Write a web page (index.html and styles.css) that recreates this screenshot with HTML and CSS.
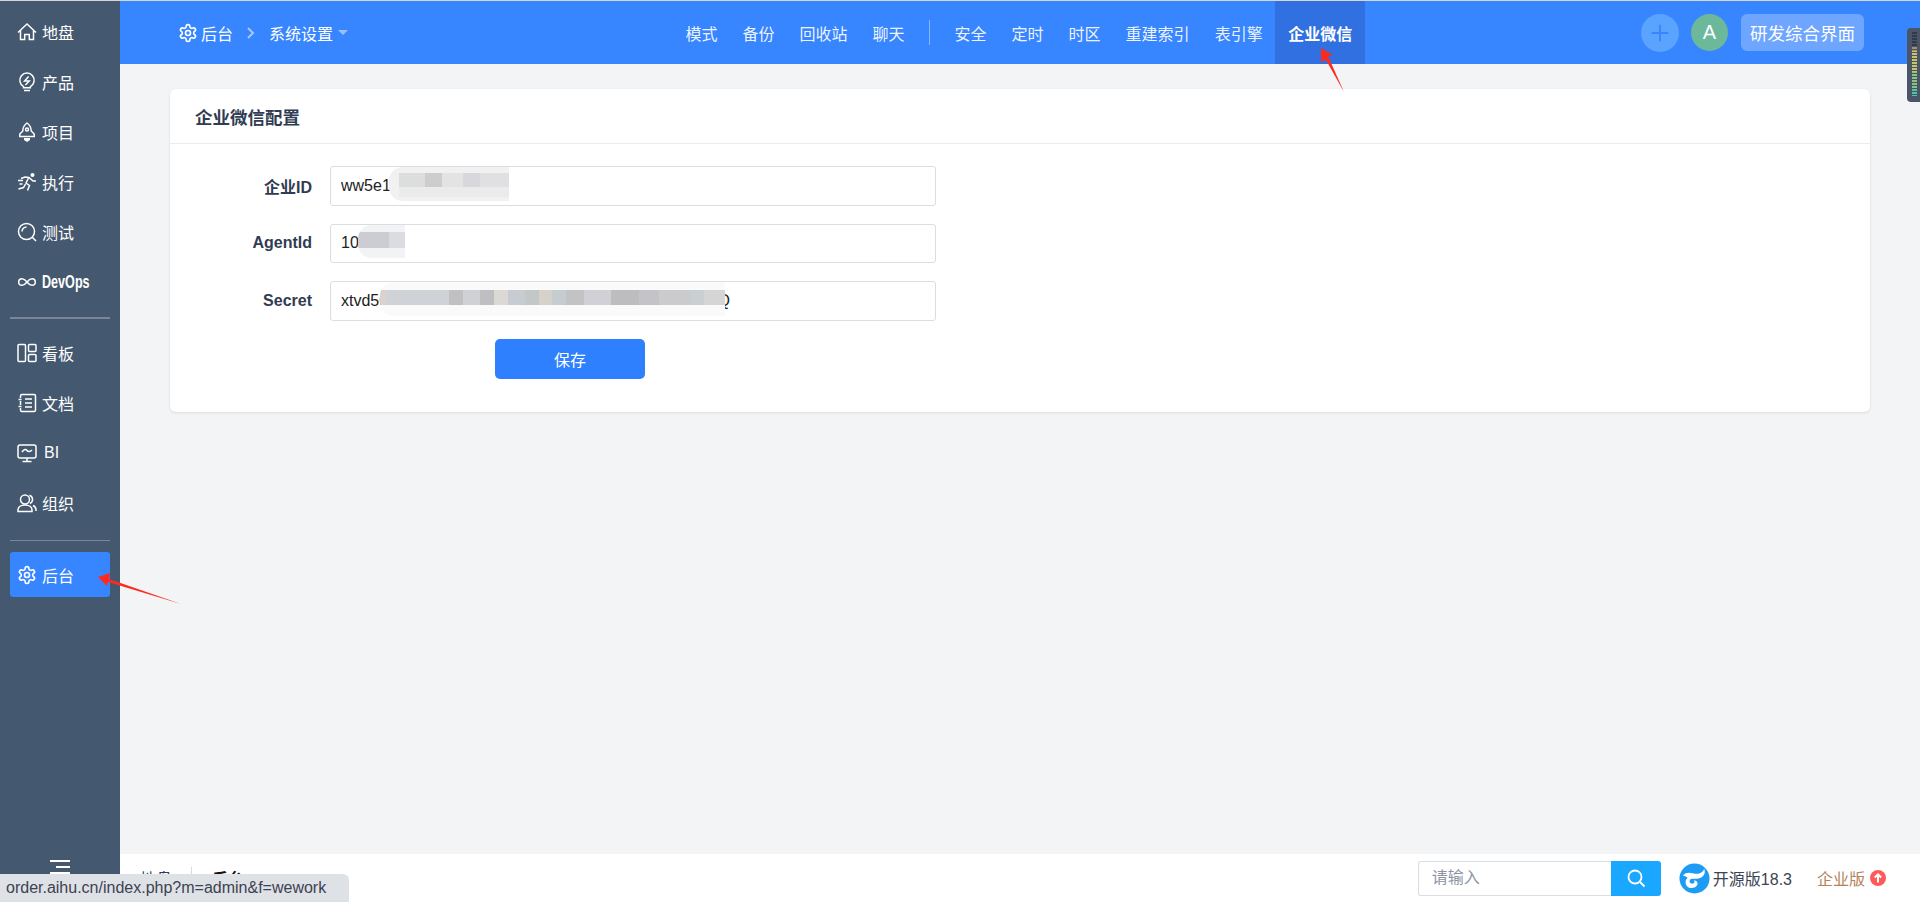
FILE: index.html
```html
<!DOCTYPE html>
<html lang="zh-CN">
<head>
    <meta charset="UTF-8">
    <title>企业微信配置</title>
    <link rel="stylesheet" href="styles.css">
</head>
<body>
    <svg class="icon-defs" width="0" height="0">
        <symbol id="gear" viewBox="0 0 24 24">
            <path d="M12.22 2h-.44a2 2 0 0 0-2 2v.18a2 2 0 0 1-1 1.73l-.43.25a2 2 0 0 1-2 0l-.15-.08a2 2 0 0 0-2.73.73l-.22.38a2 2 0 0 0 .73 2.73l.15.1a2 2 0 0 1 1 1.72v.51a2 2 0 0 1-1 1.74l-.15.09a2 2 0 0 0-.73 2.73l.22.38a2 2 0 0 0 2.73.73l.15-.08a2 2 0 0 1 2 0l.43.25a2 2 0 0 1 1 1.73V20a2 2 0 0 0 2 2h.44a2 2 0 0 0 2-2v-.18a2 2 0 0 1 1-1.73l.43-.25a2 2 0 0 1 2 0l.15.08a2 2 0 0 0 2.73-.73l.22-.39a2 2 0 0 0-.73-2.73l-.15-.08a2 2 0 0 1-1-1.74v-.5a2 2 0 0 1 1-1.74l.15-.09a2 2 0 0 0 .73-2.73l-.22-.38a2 2 0 0 0-2.73-.73l-.15.08a2 2 0 0 1-2 0l-.43-.25a2 2 0 0 1-1-1.73V4a2 2 0 0 0-2-2z"/>
            <circle cx="12" cy="12" r="3"/>
        </symbol>
    </svg>

    <div class="app">
        <aside class="sidebar">
            <a class="side-item">
                <svg class="side-icon" viewBox="0 0 20 20"><path d="M1 10.5 10 2l9 8.5M3.5 8.5v9h4.2v-5h4.6v5h4.2v-9"/></svg>
                <span>地盘</span>
            </a>
            <a class="side-item">
                <svg class="side-icon" viewBox="0 0 20 20"><path d="M6.6 14.6a7.2 7.2 0 1 1 6.8 0v1.2H6.6zM7 18.6h6M11.6 4.6 7.6 9h4.6l-3.8 4"/></svg>
                <span>产品</span>
            </a>
            <a class="side-item">
                <svg class="side-icon" viewBox="0 0 20 20"><path d="M10 1c-3 2-4.2 5-4.2 8l-3 3v2.6h14.400V12l-3-3c0-3-1.200-6-4.200-8zM5.800 14.600h8.400"/><circle cx="10" cy="7.500" r="1.500"/><path class="solid" d="M7 16h6v2l-3 2-3-2z"/></svg>
                <span>项目</span>
            </a>
            <a class="side-item">
                <svg class="side-icon" viewBox="0 0 20 20"><circle class="solid" cx="15.500" cy="3" r="2"/><path d="M1 8.500h5M2.500 12h3M4 6.500l4-1.500 4 .5 4 3.500h3M11.500 6 9 11l3.500 2.500-2 5M8.500 12 6.500 15.500 1.500 17"/></svg>
                <span>执行</span>
            </a>
            <a class="side-item">
                <svg class="side-icon" viewBox="0 0 20 20"><circle cx="9.500" cy="9.500" r="8"/><path d="m15 15 4 4M5 9.500a4.500 4.500 0 0 1 4.500-4.500"/></svg>
                <span>测试</span>
            </a>
            <a class="side-item">
                <svg class="side-icon" viewBox="0 0 20 20"><path d="M10 10C8.200 7.600 6.800 6.700 5 6.700a3.300 3.300 0 0 0 0 6.600c1.800 0 3.200-.9 5-3.300s3.200-3.300 5-3.300a3.300 3.300 0 0 1 0 6.600c-1.800 0-3.200-.9-5-3.300z"/></svg>
                <span class="devops">DevOps</span>
            </a>
            <div class="side-divider thick"></div>
            <a class="side-item">
                <svg class="side-icon" viewBox="0 0 20 20"><rect x="1" y="1.500" width="7.500" height="17" rx="1"/><rect x="11.500" y="1.500" width="7.500" height="7" rx="1"/><rect x="11.500" y="11.500" width="7.500" height="7" rx="1"/></svg>
                <span>看板</span>
            </a>
            <a class="side-item">
                <svg class="side-icon" viewBox="0 0 20 20"><path d="M3.500 5V3a1.500 1.500 0 0 1 1.500-1.500h12A1.500 1.500 0 0 1 18.500 3v14a1.500 1.500 0 0 1-1.500 1.500H5A1.500 1.500 0 0 1 3.500 17v-2M3.500 8v4M1.500 6.500h3M1.500 13.500h3M8 6h7M8 10h7M8 14h7"/></svg>
                <span>文档</span>
            </a>
            <a class="side-item">
                <svg class="side-icon" viewBox="0 0 20 20"><rect x="1" y="2" width="18" height="13" rx="2"/><path d="M5 9c2-3 4-3 5-1.500s3 1.500 5-.5M10 15v3.500M5.500 18.500h9"/></svg>
                <span class="bi">BI</span>
            </a>
            <a class="side-item">
                <svg class="side-icon" viewBox="0 0 20 20"><circle cx="8" cy="6.500" r="4.500"/><path d="M1 18.500v-1.500c0-3 3-5 7-5s7 2 7 5v1.500zM12.500 2.200a4.500 4.500 0 0 1 .5 8.300M16 12.500c2 .8 3 2.500 3 4.500v1"/></svg>
                <span>组织</span>
            </a>
            <div class="side-divider"></div>
            <a class="side-item active">
                <svg class="side-icon gear"><use href="#gear"/></svg>
                <span>后台</span>
            </a>
            <a class="side-toggle">
                <svg viewBox="0 0 20 20"><path d="M0 1h20M6 7h14M0 13h20"/></svg>
            </a>
        </aside>

        <div class="main">
            <header class="topbar">
                <div class="crumbs">
                    <svg class="crumb-gear"><use href="#gear"/></svg>
                    <span>后台</span>
                    <svg class="crumb-arrow" viewBox="0 0 10 14"><path d="m2 2 5 5-5 5"/></svg>
                    <span>系统设置</span>
                    <i class="caret"></i>
                </div>
                <nav class="topnav">
                    <a>模式</a>
                    <a>备份</a>
                    <a>回收站</a>
                    <a>聊天</a>
                    <div class="nav-divider"></div>
                    <a>安全</a>
                    <a>定时</a>
                    <a>时区</a>
                    <a>重建索引</a>
                    <a>表引擎</a>
                    <a class="active">企业微信</a>
                </nav>
                <div class="top-right">
                    <button type="button" class="btn-add">
                        <svg viewBox="0 0 24 24"><path d="M1 12h22M12 1v22"/></svg>
                    </button>
                    <div class="avatar">A</div>
                    <button type="button" class="btn-space">研发综合界面</button>
                </div>
            </header>

            <div class="content">
                <section class="card">
                    <h2 class="card-title">企业微信配置</h2>
                    <form class="card-body">
                        <div class="form-row">
                            <label for="corp-id">企业ID</label>
                            <div class="field">
                                <input type="text" id="corp-id" value="ww5e1000000000000">
                                <span class="blur blur-id"></span>
                            </div>
                        </div>
                        <div class="form-row">
                            <label for="agent-id">AgentId</label>
                            <div class="field">
                                <input type="text" id="agent-id" value="1000000">
                                <span class="blur blur-agent"></span>
                            </div>
                        </div>
                        <div class="form-row">
                            <label for="secret">Secret</label>
                            <div class="field">
                                <input type="text" id="secret" value="xtvd500000000000000000000000000000000000000Q">
                                <span class="blur blur-secret"></span>
                            </div>
                        </div>
                        <div class="form-row">
                            <span class="label-gap"></span>
                            <div class="form-actions">
                                <button type="button" class="btn-save">保存</button>
                            </div>
                        </div>
                    </form>
                </section>
            </div>

            <footer class="bottombar">
                <div class="foot-crumbs">
                    <span>地盘</span>
                    <i class="foot-sep"></i>
                    <strong>后台</strong>
                </div>
                <div class="foot-right">
                    <div class="search">
                        <input type="text" placeholder="请输入">
                        <button type="button">
                            <svg viewBox="0 0 20 20"><circle cx="9" cy="9" r="6.500"/><path d="m14 14 4.500 4.500"/></svg>
                        </button>
                    </div>
                    <div class="version">
                        <svg class="logo" viewBox="0 0 32 32">
                            <circle class="logo-disc" cx="16" cy="16" r="15.500"/>
                            <path class="logo-swirl" d="M4 13c5-6 11-1 16-2 3-.5 5-2 6-5 2 5-1 9-6 10-4 .8-8-1-9 2-.7 2.500 2 4 4 3 1.500-.7 1.500-2.500 0-3 3-.5 5 2 4 4.500-1.200 3-6 4.500-9.500 2.500C6 23 6 17 9 15.500 7.500 14 5.500 13.500 4 13z"/>
                        </svg>
                        <span>开源版18.3</span>
                    </div>
                    <div class="edition">
                        <span>企业版</span>
                        <svg class="up-badge" viewBox="0 0 16 16">
                            <circle cx="8" cy="8" r="8"/>
                            <path d="M8 12.500V4.500M4.800 7.500 8 4.300l3.200 3.200"/>
                        </svg>
                    </div>
                </div>
            </footer>
        </div>
    </div>

    <div class="status-bubble">order.aihu.cn/index.php?m=admin&amp;f=wework</div>
    <div class="meter"></div>

    <svg class="arrows" viewBox="0 0 1920 902">
        <polygon points="1321,48 1333,55 1328,56 1344,92 1326,60 1321,62"/>
        <polygon points="98,577 110,573 109,579 181,604 108,582 107,586"/>
    </svg>
</body>
</html>
```
FILE: styles.css
```css
:root {
    --primary-color: #3785ff;
    --text-color: #313c52;
    --border-color: #dcdde0;
    --background-color: #f3f4f6;
    --sidebar-color: #44586f;
}
html, body {
    margin: 0;
    height: 100%;
    overflow: hidden;
}
body {
    position: relative;
    border-top: 1px solid #d6d6d6;
    box-sizing: border-box;
    font-family: "Liberation Sans", "Noto Sans CJK SC", sans-serif;
    font-size: 16px;
    color: var(--text-color);
    background-color: var(--background-color);
}
.icon-defs {
    position: absolute;
}
.app {
    display: flex;
    height: 100%;
}

/* sidebar */
.sidebar {
    width: 120px;
    flex-shrink: 0;
    box-sizing: border-box;
    padding: 6px 10px 0;
    display: flex;
    flex-direction: column;
    background-color: var(--sidebar-color);
    color: #fff;
}
.side-item {
    height: 50px;
    flex-shrink: 0;
    display: flex;
    align-items: center;
    gap: 5px;
    padding-left: 7px;
    box-sizing: border-box;
}
.side-item.active {
    height: 45px;
    border-radius: 3px;
    background-color: var(--primary-color);
}
.side-icon {
    width: 20px;
    height: 20px;
    flex-shrink: 0;
    fill: none;
    stroke: #fff;
    stroke-width: 1.5;
}
.side-icon .solid {
    fill: #fff;
    stroke: none;
}
.side-icon.gear {
    stroke-width: 2;
}
.devops {
    display: inline-block;
    font-size: 18px;
    font-weight: 700;
    transform: scaleX(0.7);
    transform-origin: left center;
}
.bi {
    margin-left: 2px;
}
.side-divider {
    height: 1px;
    margin: 12px 0 11px;
    background-color: rgba(255, 255, 255, 0.28);
}
.side-divider.thick {
    height: 2px;
    margin: 10px 0 9px;
}
.side-toggle {
    margin: auto 0 0 40px;
    height: 42px;
    width: 20px;
}
.side-toggle svg {
    width: 20px;
    height: 20px;
    fill: none;
    stroke: #fff;
    stroke-width: 2;
}

/* top bar */
.main {
    flex: 1;
    min-width: 0;
    display: flex;
    flex-direction: column;
}
.topbar {
    height: 63px;
    flex-shrink: 0;
    display: flex;
    align-items: stretch;
    background-color: var(--primary-color);
    color: #fff;
}
.crumbs {
    width: 553px;
    box-sizing: border-box;
    padding-left: 58px;
    display: flex;
    align-items: center;
}
.crumb-gear {
    width: 20px;
    height: 20px;
    margin-right: 3px;
    fill: none;
    stroke: #fff;
    stroke-width: 2;
}
.crumb-arrow {
    width: 10px;
    height: 14px;
    margin: 0 13px;
    fill: none;
    stroke: rgba(255, 255, 255, 0.55);
    stroke-width: 2;
}
.caret {
    margin-left: 5px;
    border-top: 5px solid rgba(255, 255, 255, 0.5);
    border-left: 5px solid transparent;
    border-right: 5px solid transparent;
}
.topnav {
    display: flex;
    align-items: stretch;
}
.topnav a {
    display: flex;
    align-items: center;
    padding: 0 12.5px;
    color: rgba(255, 255, 255, 0.92);
}
.topnav a.active {
    padding: 0 13px;
    font-weight: 700;
    color: #fff;
    background-color: #3170e0;
}
.nav-divider {
    width: 1px;
    height: 25px;
    margin: 19px 12px 0;
    background-color: rgba(255, 255, 255, 0.4);
}
.top-right {
    margin-left: auto;
    padding-right: 56px;
    display: flex;
    align-items: center;
}
.btn-add {
    width: 38px;
    height: 38px;
    padding: 10px;
    border: none;
    border-radius: 50%;
    background-color: #5aa4ff;
}
.btn-add svg {
    display: block;
    width: 100%;
    fill: none;
    stroke: #3785ff;
    stroke-width: 2.5;
}
.avatar {
    width: 37px;
    height: 37px;
    margin-left: 12px;
    border-radius: 50%;
    display: flex;
    align-items: center;
    justify-content: center;
    font-size: 20px;
    color: #fff;
    background-color: #6bb99a;
}
.btn-space {
    height: 37px;
    margin-left: 13px;
    padding: 0 9px;
    border: none;
    border-radius: 6px;
    font-family: inherit;
    font-size: 17.500px;
    color: #fff;
    background-color: #6ea5ff;
}

/* config card */
.content {
    flex: 1;
    padding: 25px 50px 0;
    min-height: 0;
}
.card {
    height: 323px;
    border-radius: 6px;
    background-color: #fff;
    box-shadow: 0 1px 3px rgba(0, 0, 0, 0.1);
}
.card-title {
    margin: 0;
    height: 55px;
    padding-left: 25px;
    display: flex;
    align-items: center;
    box-sizing: border-box;
    border-bottom: 1px solid #ececee;
    font-size: 17.500px;
    font-weight: 700;
}
.card-body {
    padding-top: 22px;
    display: flex;
    flex-direction: column;
    gap: 18px;
}
.form-row {
    display: flex;
    align-items: center;
    gap: 18px;
}
.form-row label, .label-gap {
    width: 142px;
    text-align: right;
    font-weight: 700;
}
.field {
    position: relative;
    width: 606px;
    height: 39.500px;
}
.field input {
    width: 100%;
    height: 100%;
    box-sizing: border-box;
    padding: 0 10px;
    border: 1px solid var(--border-color);
    border-radius: 3px;
    font-family: inherit;
    font-size: 16px;
    color: #222;
    background-color: #fff;
}
.form-actions {
    width: 606px;
    padding-left: 165px;
    box-sizing: border-box;
}
.btn-save {
    display: block;
    width: 150px;
    height: 40px;
    border: none;
    border-radius: 5px;
    font-family: inherit;
    font-size: 16px;
    color: #fff;
    background-color: #2f80ff;
}

/* redacted parts of the values */
.blur {
    position: absolute;
    top: 1px;
    border-radius: 14px 0 0 14px;
    background-repeat: no-repeat;
}
.blur-id {
    left: 59px;
    width: 120px;
    height: 34px;
    background-color: #f1f1f1;
    background-image:
        linear-gradient(90deg, transparent 8%, #dcdddd 8% 30%, #cdcdd0 30% 44%, #e3e3e3 44% 62%, #d8d7db 62% 76%, #e0e0e2 76%),
        linear-gradient(90deg, transparent 8%, #ebebeb 8%);
    background-size: 100% 14px, 100% 10px;
    background-position: 0 6px, 0 20px;
}
.blur-agent {
    left: 28px;
    width: 47px;
    height: 33px;
    background-color: #f2f3f4;
    background-image: linear-gradient(90deg, #ccccd2 0 65%, #dcdce0 65%);
    background-size: 100% 16px;
    background-position: 0 7px;
}
.blur-secret {
    left: 50px;
    width: 345px;
    height: 34px;
    background-color: #fafafa;
    background-image: linear-gradient(90deg, #d9d2ce 0 2%, #cfd2d6 2% 20%, #c0c0c2 20% 24%, #d0d1d5 24% 29%, #bfbfc3 29% 33%, #dcd8d4 33% 37%, #c7ccd3 37% 42%, #c2c8c8 42% 46%, #d6d2ca 46% 50%, #c5cdd0 50% 54%, #c3c3c5 54% 59%, #d0d0d6 59% 67%, #bdbdc0 67% 75%, #c4c4c8 75% 81%, #cbcbcd 81% 90%, #cacfd2 90% 94%, #d5d5d5 94%);
    background-size: 100% 15px;
    background-position: 0 8px;
}

/* bottom bar */
.bottombar {
    height: 48px;
    flex-shrink: 0;
    display: flex;
    align-items: center;
    justify-content: space-between;
    background-color: #fff;
}
.foot-crumbs {
    padding: 0 0 0 20px;
    display: flex;
    align-items: center;
}
.foot-sep {
    width: 1px;
    height: 22px;
    margin: 0 20px 0 19px;
    background-color: #d9d9dc;
}
.foot-crumbs strong {
    color: #111;
}
.foot-right {
    padding-right: 34px;
    display: flex;
    align-items: center;
}
.search {
    display: flex;
    width: 243px;
    height: 35px;
}
.search input {
    flex: 1;
    min-width: 0;
    box-sizing: border-box;
    padding: 0 13px;
    border: 1px solid var(--border-color);
    border-right: none;
    border-radius: 3px 0 0 3px;
    font-family: inherit;
    font-size: 16px;
}
.search input::placeholder {
    color: #8d93a3;
}
.search button {
    width: 50px;
    padding: 0 15px;
    border: none;
    border-radius: 0 3px 3px 0;
    background-color: #1aa7ff;
}
.search svg {
    display: block;
    width: 20px;
    height: 20px;
    fill: none;
    stroke: #fff;
    stroke-width: 1.800;
}
.version {
    margin-left: 18px;
    display: flex;
    align-items: center;
    gap: 3px;
    color: #3c4353;
}
.logo {
    width: 31px;
    height: 31px;
}
.logo-disc {
    fill: #1c9cf5;
}
.logo-swirl {
    fill: #fff;
}
.edition {
    margin-left: 25px;
    display: flex;
    align-items: center;
    gap: 5px;
    color: #b5835a;
}
.up-badge {
    width: 16px;
    height: 16px;
    fill: #ff5a5a;
}
.up-badge path {
    fill: none;
    stroke: #fff;
    stroke-width: 2;
}

/* browser chrome and annotations drawn over the page */
.status-bubble {
    position: absolute;
    left: 0;
    bottom: 0;
    width: 349px;
    height: 28px;
    box-sizing: border-box;
    padding-left: 6px;
    display: flex;
    align-items: center;
    border-top-right-radius: 6px;
    font-size: 16px;
    color: #3c4350;
    background-color: #dee1e6;
}
.meter {
    position: absolute;
    top: 27px;
    right: 0;
    width: 13px;
    height: 74px;
    border-radius: 4px 0 0 4px;
    background-color: #4b5568;
    background-image:
        repeating-linear-gradient(180deg, transparent 0 2px, #4b5568 2px 3px),
        linear-gradient(180deg, #2f3a4c 0 24%, #b58d6e 24% 30%, #c9c368 30% 62%, #8cc47f 62% 88%, #4fc2a8 88%);
    background-size: 5px 64px;
    background-position: 5px 4px;
    background-repeat: no-repeat;
}
.arrows {
    position: absolute;
    top: -1px;
    left: 0;
    width: 1920px;
    height: 902px;
    pointer-events: none;
    fill: #ff2a1f;
}
```
